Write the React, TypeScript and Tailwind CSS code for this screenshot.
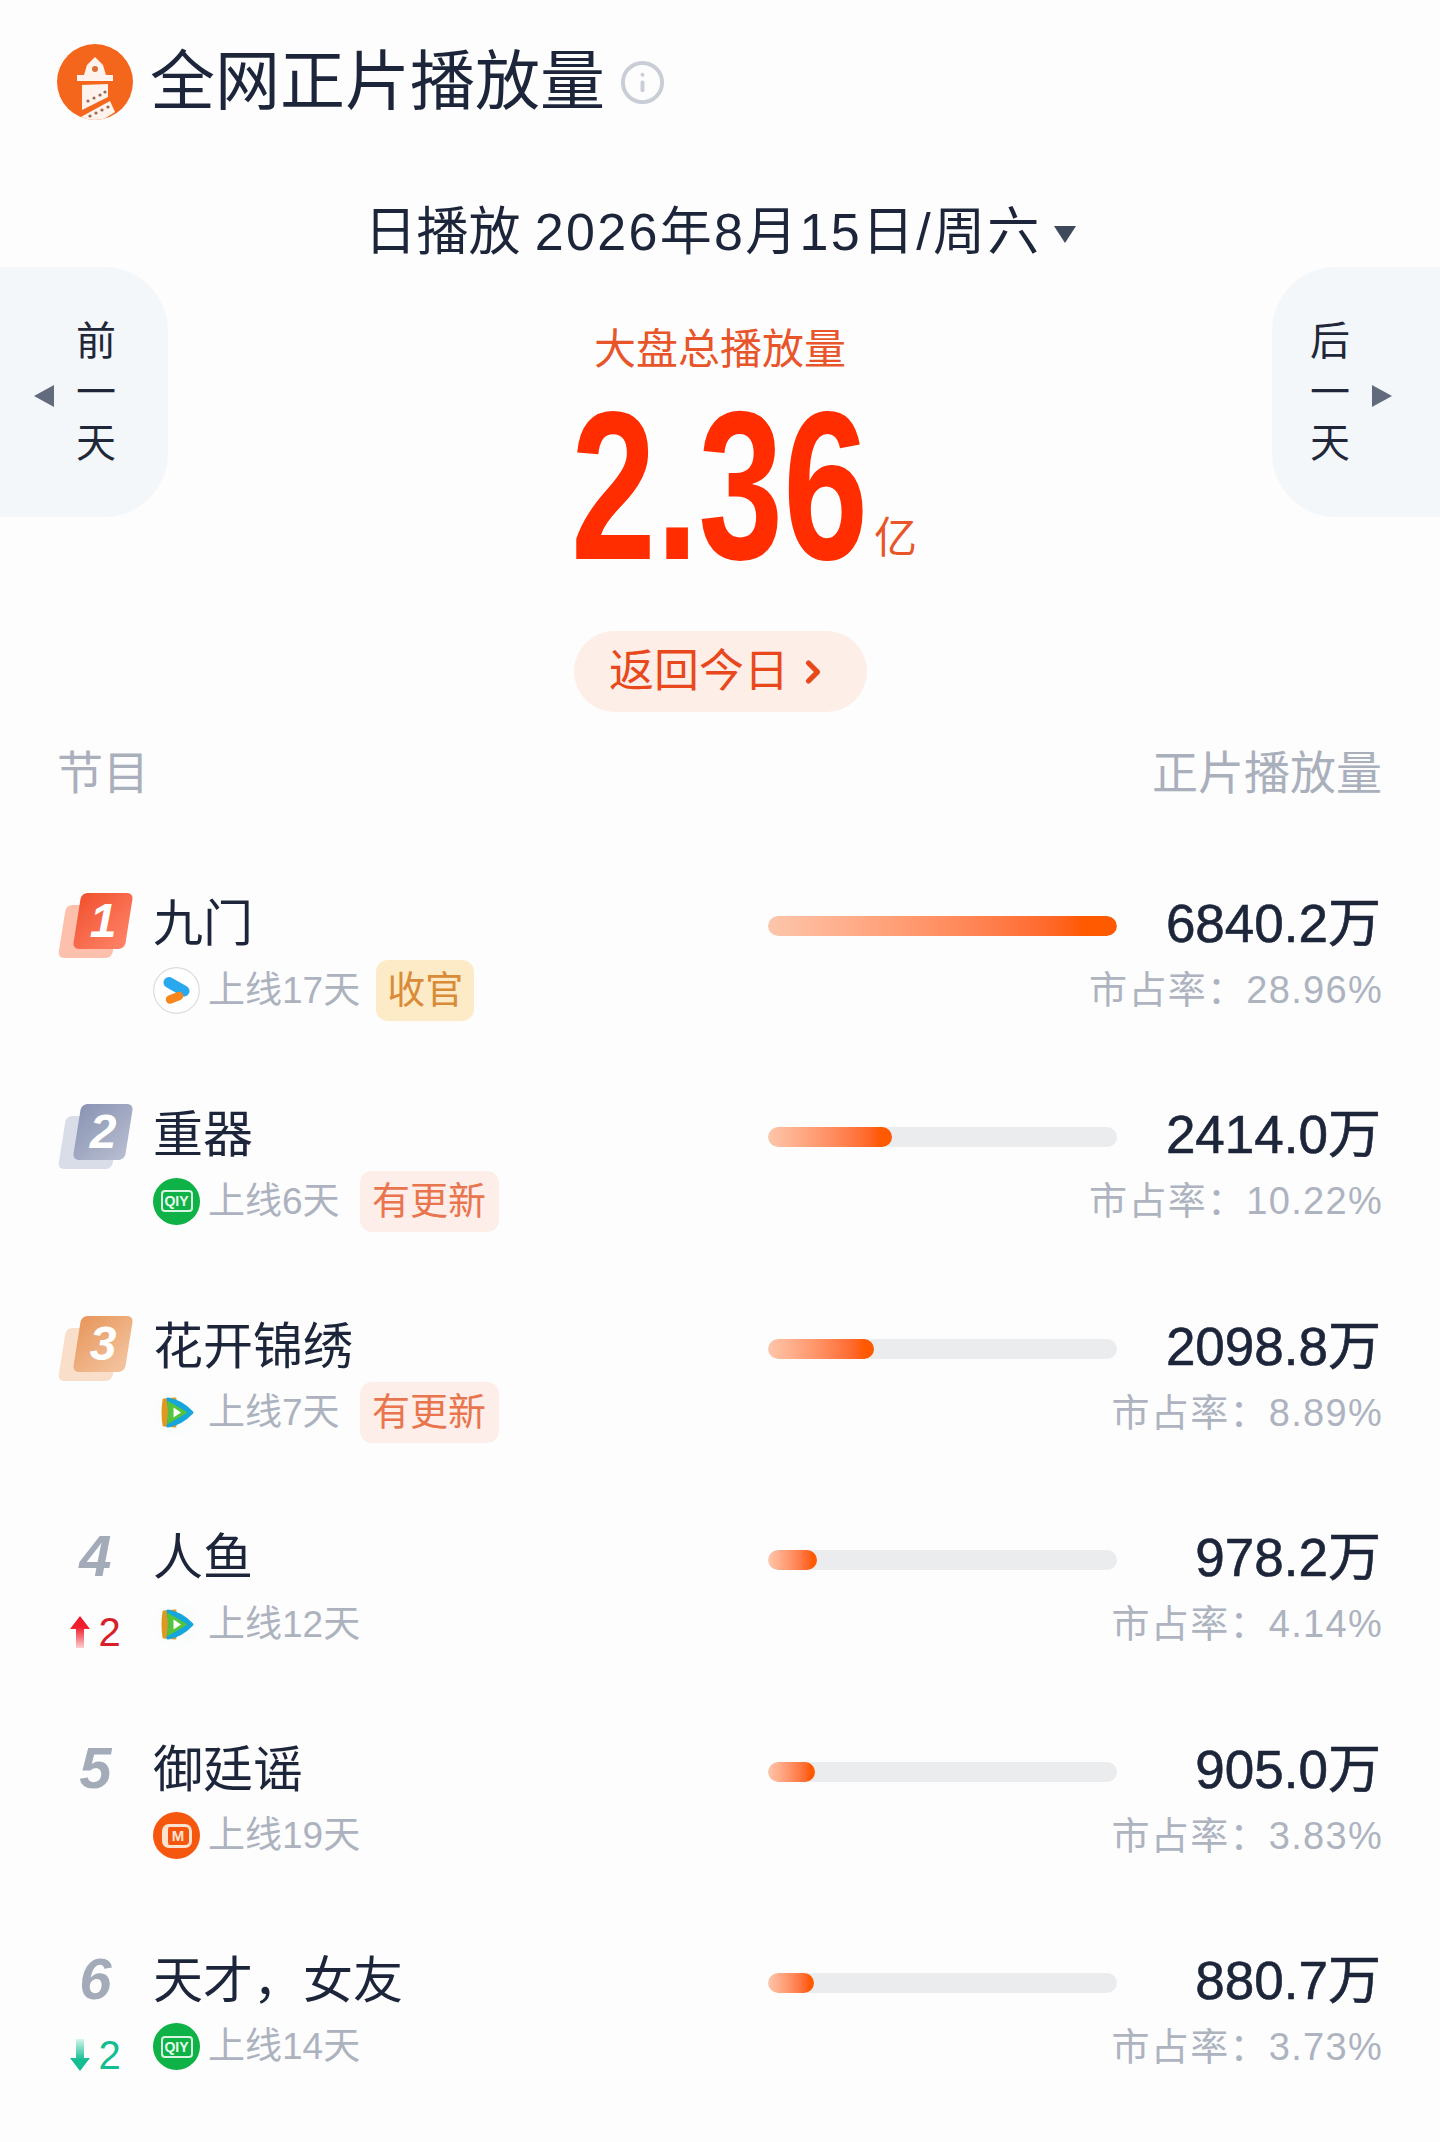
import { ChevronRight, Info } from "lucide-react";

type Platform = "youku" | "iqiyi" | "tencent" | "mango";

interface Show {
  rank: number;
  title: string;
  platform: Platform;
  days: string;
  tag?: "收官" | "有更新";
  barWidth: number;
  plays: string;
  share: string;
  delta?: "up" | "down";
}

const shows: Show[] = [
  { rank: 1, title: "九门", platform: "youku", days: "上线17天", tag: "收官", barWidth: 349, plays: "6840.2万", share: "28.96%" },
  { rank: 2, title: "重器", platform: "iqiyi", days: "上线6天", tag: "有更新", barWidth: 124, plays: "2414.0万", share: "10.22%" },
  { rank: 3, title: "花开锦绣", platform: "tencent", days: "上线7天", tag: "有更新", barWidth: 106, plays: "2098.8万", share: "8.89%" },
  { rank: 4, title: "人鱼", platform: "tencent", days: "上线12天", barWidth: 49, plays: "978.2万", share: "4.14%", delta: "up" },
  { rank: 5, title: "御廷谣", platform: "mango", days: "上线19天", barWidth: 47, plays: "905.0万", share: "3.83%" },
  { rank: 6, title: "天才，女友", platform: "iqiyi", days: "上线14天", barWidth: 46, plays: "880.7万", share: "3.73%", delta: "down" },
];

const LighthouseLogo = () => (
  <svg width="76" height="76" viewBox="0 0 76 76" className="shrink-0">
    <defs>
      <clipPath id="logo-disc">
        <circle cx="38" cy="38" r="38" />
      </clipPath>
    </defs>
    <circle cx="38" cy="38" r="38" fill="#f4661b" />
    <g clipPath="url(#logo-disc)" fill="#fdf3ec">
      <polygon points="38,13 46,21 49,31 56,31 56,37 20,37 20,31 27,31 30,21" />
      <polygon points="25,41 51,40 51,53 25,66" />
      <polygon points="22,74 53,57 58,68 36,82 24,82" />
      <circle cx="38" cy="25" r="3" fill="#d9703c" />
      <circle cx="31" cy="57" r="1.6" fill="#9a6a55" />
      <circle cx="37" cy="54" r="1.6" fill="#9a6a55" />
      <circle cx="43" cy="51" r="1.6" fill="#9a6a55" />
      <circle cx="48" cy="48" r="1.6" fill="#9a6a55" />
      <circle cx="33" cy="72" r="1.6" fill="#9a6a55" />
      <circle cx="39" cy="69" r="1.6" fill="#9a6a55" />
      <circle cx="45" cy="66" r="1.6" fill="#9a6a55" />
      <circle cx="51" cy="63" r="1.6" fill="#9a6a55" />
    </g>
  </svg>
);

const PlatformIcon = ({ platform }: { platform: Platform }) => {
  if (platform === "youku") {
    return (
      <svg width="47" height="47" viewBox="0 0 47 47" className="shrink-0">
        <circle cx="23.5" cy="23.5" r="22.8" fill="#fff" stroke="#d9dcdf" strokeWidth="1.2" />
        <path d="M16 15.5 L31 24" stroke="#2aa8ee" strokeWidth="11" strokeLinecap="round" />
        <path d="M17 32.5 L26 29" stroke="#f7861e" strokeWidth="8.5" strokeLinecap="round" />
      </svg>
    );
  }
  if (platform === "iqiyi") {
    return (
      <div className="flex h-[47px] w-[47px] shrink-0 items-center justify-center rounded-full bg-[#0fb246]">
        <span className="flex h-[22px] w-[32px] items-center justify-center rounded-[4px] border-2 border-[#d9f5e2] text-[14px] leading-none font-bold text-[#e6fbee]">
          QIY
        </span>
      </div>
    );
  }
  if (platform === "tencent") {
    return (
      <svg width="47" height="47" viewBox="0 0 47 47" className="shrink-0">
        <circle cx="23.5" cy="23.5" r="23" fill="#fbfcfc" />
        <path d="M11 11 L22 10 L22 37 L11 36 Q9 23.5 11 11 Z" fill="#dd9a1f" stroke="#dd9a1f" strokeWidth="3" strokeLinejoin="round" />
        <path d="M15 10 Q28 12 39 23.5 Q28 35 15 37 Q18 23.5 15 10 Z" fill="#17a6dc" stroke="#17a6dc" strokeWidth="3" strokeLinejoin="round" />
        <path d="M15 13 L33 23.5 L15 34 Q17 23.5 15 13 Z" fill="#55c43a" stroke="#55c43a" strokeWidth="1.5" strokeLinejoin="round" />
        <path d="M20.5 18.5 L28 23.5 L20.5 28.5 Z" fill="#fff" />
      </svg>
    );
  }
  return (
    <div className="flex h-[47px] w-[47px] shrink-0 items-center justify-center rounded-full bg-[#f6570f]">
      <span className="flex h-[24px] w-[30px] items-center justify-center rounded-[7px] border-[3px] border-l-[6px] border-[#fde3cf] text-[15px] leading-none font-bold text-[#fde3cf]">
        M
      </span>
    </div>
  );
};

const RankBadge = ({ rank }: { rank: number }) => {
  const front =
    rank === 1
      ? "bg-gradient-to-br from-[#f0502b] to-[#ff8368]"
      : rank === 2
        ? "bg-gradient-to-br from-[#8a94b3] to-[#b8bed1]"
        : "bg-gradient-to-br from-[#e7965a] to-[#f4c6a2]";
  const back = rank === 1 ? "bg-[#fcc0ad]" : rank === 2 ? "bg-[#d9dde8]" : "bg-[#f9dfca]";
  return (
    <div className="relative mt-[3px] h-[65px] w-[75px]">
      <div className={`absolute top-[12px] left-[4px] h-[53px] w-[54px] -skew-x-[9deg] rounded-[6px] ${back}`} />
      <div className={`absolute top-0 left-[19px] h-[56px] w-[52px] -skew-x-[9deg] rounded-[6px] ${front}`} />
      <span className="absolute top-0 left-[19px] flex h-[56px] w-[52px] items-center justify-center text-[48px] font-bold text-white italic">
        {rank}
      </span>
    </div>
  );
};

const Delta = ({ dir }: { dir: "up" | "down" }) => (
  <div className={`mt-[16px] flex items-center gap-[8px] text-[40px] leading-none ${dir === "up" ? "text-[#d8202a]" : "text-[#14bd92]"}`}>
    {dir === "up" ? (
      <svg width="20" height="32" viewBox="0 0 20 32">
        <defs>
          <linearGradient id="delta-up" x1="0" y1="0" x2="0" y2="1">
            <stop offset="0.35" stopColor="#ef1c2c" />
            <stop offset="1" stopColor="#fbd0d0" />
          </linearGradient>
        </defs>
        <path d="M10 0 L20 13 L14 13 L14 32 L6 32 L6 13 L0 13 Z" fill="url(#delta-up)" />
      </svg>
    ) : (
      <svg width="20" height="32" viewBox="0 0 20 32">
        <defs>
          <linearGradient id="delta-down" x1="0" y1="0" x2="0" y2="1">
            <stop offset="0" stopColor="#d4f5ea" />
            <stop offset="0.65" stopColor="#14bd92" />
          </linearGradient>
        </defs>
        <path d="M10 32 L20 19 L14 19 L14 0 L6 0 L6 19 L0 19 Z" fill="url(#delta-down)" />
      </svg>
    )}
    <span>2</span>
  </div>
);

const DayButton = ({ side, label }: { side: "prev" | "next"; label: string[] }) => (
  <div
    className={`flex h-[250px] w-[168px] items-center gap-[22px] bg-[#f4f7f9] ${
      side === "prev" ? "justify-end rounded-r-[64px] pr-[52px]" : "justify-start rounded-l-[64px] pl-[38px]"
    }`}
  >
    {side === "prev" && <div className="mt-[8px] h-0 w-0 border-y-[11px] border-r-[20px] border-y-transparent border-r-[#626b7d]" />}
    <div className="flex flex-col items-center text-[40px] leading-[51px] text-[#1f2739]">
      {label.map((ch, i) => (
        <span key={i}>{ch}</span>
      ))}
    </div>
    {side === "next" && <div className="mt-[8px] h-0 w-0 border-y-[11px] border-l-[20px] border-y-transparent border-l-[#626b7d]" />}
  </div>
);

const ShowRow = ({ show }: { show: Show }) => (
  <div className="flex h-[211.4px] items-start pr-[59px] pl-[58px]">
    <div className="w-[710px] shrink-0">
      <div className="flex h-[64px] items-center">
        <div className="flex w-[75px] justify-center">
          {show.rank <= 3 ? (
            <RankBadge rank={show.rank} />
          ) : (
            <span className="-mt-[5px] text-[58px] font-bold text-[#a4abb8] italic">{show.rank}</span>
          )}
        </div>
        <span className="ml-[20px] text-[50px] leading-[64px] text-[#1c2539]">{show.title}</span>
      </div>
      <div className="mt-[3px] flex h-[62px] items-center">
        <div className="flex w-[75px] justify-center">{show.delta && <Delta dir={show.delta} />}</div>
        <div className="ml-[20px] flex items-center">
          <PlatformIcon platform={show.platform} />
          <span className="ml-[8px] text-[37px] leading-none text-[#acb2be]">{show.days}</span>
          {show.tag === "收官" && (
            <span className="ml-[16px] flex h-[61px] w-[98px] items-center justify-center rounded-[12px] bg-[#fdeac6] text-[38px] text-[#d98b38]">
              {show.tag}
            </span>
          )}
          {show.tag === "有更新" && (
            <span className="ml-[20px] flex h-[61px] w-[139px] items-center justify-center rounded-[12px] bg-[#fdeee9] text-[38px] text-[#e9754f]">
              {show.tag}
            </span>
          )}
        </div>
      </div>
    </div>
    <div className="mt-[24px] h-[20px] w-[349px] shrink-0 overflow-hidden rounded-full bg-[#eaecee]">
      <div
        className="h-full rounded-full bg-gradient-to-r from-[#fcc6ab] to-[#ff5a00] to-90%"
        style={{ width: show.barWidth }}
      />
    </div>
    <div className="flex min-w-0 flex-1 flex-col items-end whitespace-nowrap">
      <span className="h-[64px] text-[53px] leading-[64px] text-[#1c2539] [-webkit-text-stroke:0.6px_#1c2539]">{show.plays}</span>
      <span className="mt-[3px] -mr-[2px] h-[62px] text-[38px] leading-[62px] tracking-[1.3px] text-[#adb3bf]">市占率：{show.share}</span>
    </div>
  </div>
);

export default function App() {
  return (
    <div className="min-h-[2142px] bg-[#fdfdfe] pt-[44px] font-['Liberation_Sans','Noto_Sans_CJK_SC',sans-serif]">
      <header className="flex items-center pl-[57px]">
        <LighthouseLogo />
        <h1 className="ml-[17px] text-[65px] leading-[76px] font-normal text-[#1c2539]">全网正片播放量</h1>
        <Info size={47} strokeWidth={2} className="ml-[14px] text-[#c8cdd6]" />
      </header>

      <div className="mt-[80px] flex items-center justify-center text-[52px] leading-[64px] text-[#1c2539]">
        <span>
          日播放 <span className="tracking-[2.3px]">2026年8月15日/周六</span>
        </span>
        <div className="mt-[4px] ml-[12px] h-0 w-0 border-x-[11px] border-t-[17px] border-x-transparent border-t-[#3f495c]" />
      </div>

      <section className="mt-[3px] flex items-start justify-between">
        <DayButton side="prev" label={["前", "一", "天"]} />
        <div className="flex flex-col items-center pt-[56px]">
          <span className="text-[42px] leading-[54px] text-[#e9552a]">大盘总播放量</span>
          <div className="relative mt-[24px] w-[298px]">
            <span className="block h-[170px] w-[298px] origin-left scale-x-[0.72] font-['Liberation_Sans'] text-[212px] leading-[170px] font-bold whitespace-nowrap text-[#ff2d00]">
              2.36
            </span>
            <span className="absolute bottom-[8px] left-full ml-[5px] text-[43px] leading-[50px] text-[#e9552a]">亿</span>
          </div>
          <button className="mt-[60px] flex h-[81px] w-[293px] items-center justify-center gap-[6px] rounded-full bg-[#fdeee8] text-[45px] text-[#e8481c]">
            返回今日
            <ChevronRight size={36} strokeWidth={3.5} />
          </button>
        </div>
        <DayButton side="next" label={["后", "一", "天"]} />
      </section>

      <div className="mt-[31px] flex justify-between pr-[58px] pl-[57px] text-[46px] leading-[60px] text-[#a9b0bc]">
        <span>节目</span>
        <span>正片播放量</span>
      </div>

      <div className="mt-[89px]">
        {shows.map((show) => (
          <ShowRow key={show.rank} show={show} />
        ))}
      </div>
    </div>
  );
}
